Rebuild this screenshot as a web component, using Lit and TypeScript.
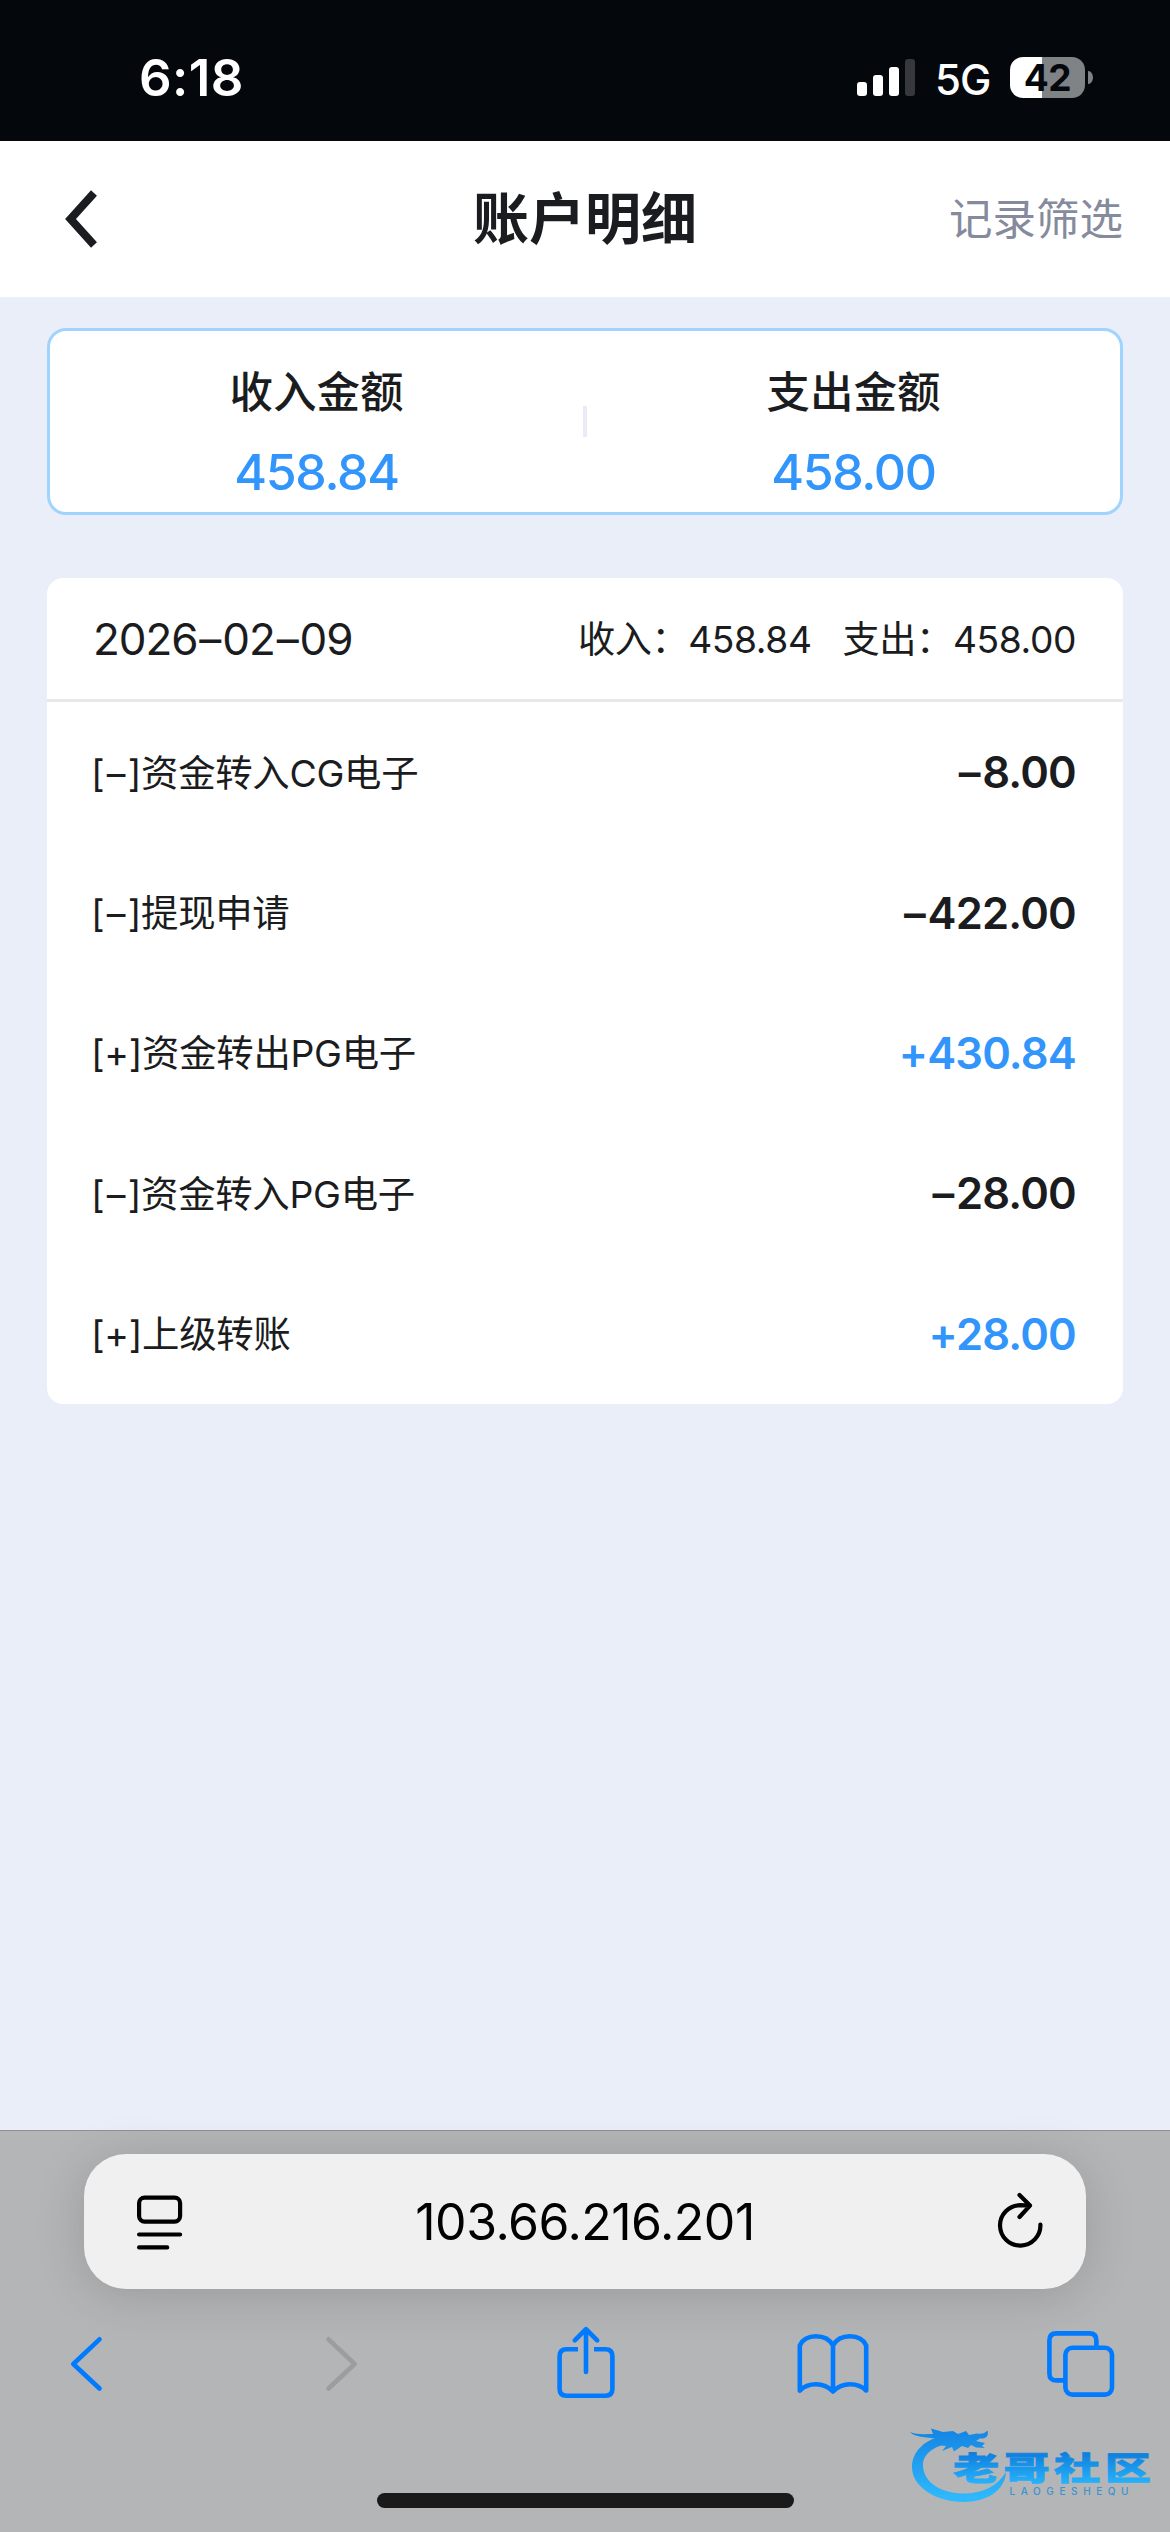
import { LitElement, html, css, svg } from "lit";
import { customElement, property } from "lit/decorators.js";
import { classMap } from "lit/directives/class-map.js";

interface Entry {
  label: string;
  amount: string;
  income: boolean;
}

const ENTRIES: Entry[] = [
  { label: "[–]资金转入CG电子", amount: "–8.00", income: false },
  { label: "[–]提现申请", amount: "–422.00", income: false },
  { label: "[+]资金转出PG电子", amount: "+430.84", income: true },
  { label: "[–]资金转入PG电子", amount: "–28.00", income: false },
  { label: "[+]上级转账", amount: "+28.00", income: true },
];

/** Gives every dash in a text its own span, so that it gets air on both sides. */
const spacedDashes = (text: string) =>
  text.split(/(–)/).map((part) => (part === "–" ? html`<span class="dash">–</span>` : part));

@customElement("status-bar")
class StatusBar extends LitElement {
  static styles = css`
    :host {
      display: flex;
      justify-content: space-between;
      box-sizing: border-box;
      height: 141px;
      padding: 57px 77px 0 139px;
      background: #04070c;
      color: #fff;
    }
    .time {
      font-size: 51px;
      font-weight: 600;
      line-height: 41px;
      letter-spacing: 0.4px;
    }
    .right {
      display: flex;
      height: 41px;
    }
    .signal {
      width: 60px;
      height: 41px;
      margin-right: 18px;
    }
    .network {
      width: 58px;
      margin-right: 17px;
      font-size: 42px;
      font-weight: 500;
      line-height: 45px;
      letter-spacing: -1px;
    }
    .battery {
      width: 75px;
      height: 41px;
      border-radius: 13px;
      background: linear-gradient(90deg, #fff 32px, #808385 32px);
      color: #04070c;
      font-size: 37px;
      font-weight: 700;
      line-height: 42px;
      letter-spacing: -0.5px;
      text-align: center;
    }
    .nub {
      width: 5px;
      height: 13px;
      margin: 14px 0 0 3px;
      border-radius: 0 5px 5px 0 / 0 7px 7px 0;
      background: #808385;
    }
  `;
  render() {
    return html`
      <div class="time">6:18</div>
      <div class="right">
        <svg class="signal" viewBox="0 0 60 41" fill="#fff">
          <rect x="0" y="25" width="10" height="14" rx="3" />
          <rect x="16" y="18" width="10" height="21" rx="3" />
          <rect x="32" y="10" width="10" height="29" rx="3" />
          <rect x="48" y="2" width="10" height="37" rx="3" fill="#36383d" />
        </svg>
        <div class="network">5G</div>
        <div class="battery">42</div>
        <div class="nub"></div>
      </div>
    `;
  }
}

@customElement("nav-header")
class NavHeader extends LitElement {
  static styles = css`
    :host {
      display: grid;
      grid-template-columns: 1fr auto 1fr;
      align-items: center;
      box-sizing: border-box;
      height: 156px;
      padding: 0 47px;
      background: #fff;
    }
    .back {
      display: block;
      width: 40px;
      height: 64px;
      margin-left: 15px;
    }
    .title {
      color: #1b1c20;
      font-size: 56px;
      font-weight: 600;
      line-height: 80px;
    }
    .filter {
      justify-self: end;
      color: #858b9c;
      font-size: 43.5px;
      line-height: 60px;
    }
  `;
  render() {
    return html`
      <svg class="back" viewBox="0 0 40 64" fill="none" stroke="#1b1c20" stroke-width="8">
        <path d="M32 6 L8.5 32 L32 58" />
      </svg>
      <div class="title">账户明细</div>
      <div class="filter">记录筛选</div>
    `;
  }
}

@customElement("summary-card")
class SummaryCard extends LitElement {
  static styles = css`
    :host {
      display: grid;
      grid-template-columns: 1fr 4px 1fr;
      align-items: center;
      box-sizing: border-box;
      height: 187px;
      border: 3px solid #a0d4ff;
      border-radius: 19px;
      background: #fff;
    }
    .cell {
      display: flex;
      flex-direction: column;
      align-items: center;
      padding-top: 18px;
    }
    .name {
      color: #1b1c20;
      font-size: 43.5px;
      font-weight: 500;
      line-height: 64px;
    }
    .value {
      color: #3295fb;
      font-size: 50px;
      font-weight: 500;
      line-height: 60px;
      letter-spacing: -1.3px;
      margin-top: 18px;
    }
    .rule {
      height: 31px;
      background: #ebebf7;
    }
  `;
  render() {
    return html`
      <div class="cell">
        <div class="name">收入金额</div>
        <div class="value">458.84</div>
      </div>
      <div class="rule"></div>
      <div class="cell">
        <div class="name">支出金额</div>
        <div class="value">458.00</div>
      </div>
    `;
  }
}

@customElement("detail-card")
class DetailCard extends LitElement {
  @property({ attribute: false }) entries: Entry[] = [];

  static styles = css`
    :host {
      display: block;
      overflow: hidden;
      border-radius: 16px;
      background: #fff;
      color: #1b1c20;
    }
    .head {
      display: flex;
      align-items: center;
      justify-content: space-between;
      box-sizing: border-box;
      height: 124px;
      padding: 0 47px 0 46px;
      border-bottom: 3px solid #e8e8e8;
    }
    .date {
      font-size: 44px;
      letter-spacing: -1.1px;
    }
    .date .dash {
      margin: 0 2px;
    }
    .totals {
      display: flex;
      gap: 31px;
      padding-bottom: 4px;
      font-size: 37.2px;
      letter-spacing: -0.4px;
    }
    .row {
      display: flex;
      align-items: center;
      justify-content: space-between;
      height: 140.4px;
      padding: 0 47px 0 44px;
    }
    .label {
      padding-bottom: 3px;
      font-size: 37.4px;
      letter-spacing: -0.3px;
    }
    .label .dash {
      margin: 0 2.5px;
    }
    .amount {
      font-size: 43.5px;
      font-weight: 600;
      letter-spacing: -0.8px;
    }
    .amount .dash {
      margin-right: 2.5px;
    }
    .income {
      color: #3295fb;
    }
  `;
  render() {
    return html`
      <div class="head">
        <div class="date">${spacedDashes("2026–02–09")}</div>
        <div class="totals">
          <span>收入：458.84</span>
          <span>支出：458.00</span>
        </div>
      </div>
      ${this.entries.map(
        (e) => html`
          <div class="row">
            <span class="label">${spacedDashes(e.label)}</span>
            <span class=${classMap({ amount: true, income: e.income })}>${spacedDashes(e.amount)}</span>
          </div>
        `,
      )}
    `;
  }
}

@customElement("browser-bar")
class BrowserBar extends LitElement {
  static styles = css`
    :host {
      display: flex;
      flex-direction: column;
      align-items: center;
      box-sizing: border-box;
      height: 402px;
      border-top: 1px solid #8e9092;
      padding-top: 23px;
      background: #b4b5b7;
    }
    .field {
      display: flex;
      align-items: center;
      justify-content: space-between;
      box-sizing: border-box;
      width: 1002px;
      height: 135px;
      padding: 0 44px;
      border-radius: 42px;
      background: #f0f0f0;
      box-shadow: 0 6px 50px rgba(0, 0, 0, 0.15);
      color: #000;
    }
    .field svg {
      display: block;
      width: 56px;
      height: 64px;
      margin: 0 -4px 0 4px;
    }
    .address {
      font-size: 50px;
      line-height: 60px;
      letter-spacing: -0.5px;
    }
    .tools {
      display: grid;
      grid-template-columns: 172px 340px 148px 346px 150px 14px;
      justify-items: center;
      width: 1170px;
      margin-top: 35px;
    }
    .tools svg {
      display: block;
      width: 80px;
      height: 80px;
    }
    .home {
      width: 417px;
      height: 15px;
      margin-top: 89px;
      border-radius: 8px;
      background: #1a1a1a;
    }
  `;
  private tool(body: unknown, color = "#007aff") {
    return html`<svg
      viewBox="0 0 80 80"
      fill="none"
      stroke=${color}
      stroke-width="4.6"
      stroke-linecap="round"
      stroke-linejoin="round"
    >
      ${body}
    </svg>`;
  }
  render() {
    return html`
      <div class="field">
        <svg viewBox="0 0 56 64" fill="none" stroke="#000" stroke-width="4.2" stroke-linecap="round">
          <rect x="7.1" y="7.6" width="41" height="24" rx="5.5" />
          <path d="M7.1 44.5 H48.1 M7.1 57.4 H35.2" />
        </svg>
        <div class="address">103.66.216.201</div>
        <svg
          viewBox="0 0 56 64"
          fill="none"
          stroke="#000"
          stroke-width="4.2"
          stroke-linecap="round"
          stroke-linejoin="round"
        >
          <path d="M50.4 34.5 A20.2 20.2 0 1 1 30.2 15.2 L39 15.6 M29.5 5 L40 15.6 L29.5 27" />
        </svg>
      </div>
      <div class="tools">
        ${this.tool(svg`<path d="M53.5 15.3 L27.3 40 L53.5 64.5" />`)}
        ${this.tool(svg`<path d="M26.5 15.3 L52.7 40 L26.5 64.5" />`, "#9c9d9f")}
        ${this.tool(svg`
          <path stroke-linecap="butt" d="M32 25.3 H20.5 Q13.6 25.3 13.6 32.2 V64.8 Q13.6 71.7 20.5 71.7 H59.5 Q66.4 71.7 66.4 64.8 V32.2 Q66.4 25.3 59.5 25.3 H48" />
          <path d="M40 48 V6 M28.8 16.4 L40 5.2 L51.2 16.4" />
        `)}
        ${this.tool(svg`
          <path d="M6.8 21.5 Q11 12.3 23 12.3 Q35 12.3 40 21.5 Q45 12.3 57 12.3 Q69 12.3 73.2 21.5 V66.5 Q67 60.3 57 60.3 Q47 60.3 40 67.5 Q33 60.3 23 60.3 Q13 60.3 6.8 66.5 Z M40 21.5 V67" />
        `)}
        ${this.tool(svg`
          <rect x="24.4" y="23.8" width="46.6" height="46.8" rx="7" />
          <path stroke-linecap="butt" d="M24.4 56.4 H15.5 Q8.4 56.4 8.4 49.4 V16.4 Q8.4 9.4 15.5 9.4 H48.4 Q55.4 9.4 55.4 16.4 V23" />
        `)}
      </div>
      <div class="home"></div>
    `;
  }
}

@customElement("site-mark")
class SiteMark extends LitElement {
  static styles = css`
    :host {
      display: block;
      width: 260px;
      height: 100px;
    }
    svg {
      display: block;
      width: 260px;
      height: 100px;
    }
    .name {
      font-family: "Noto Sans CJK SC", sans-serif;
      font-size: 34px;
      font-weight: 900;
    }
    .latin {
      font-family: Inter, "Liberation Sans", sans-serif;
      font-size: 10px;
      font-weight: 500;
    }
  `;
  render() {
    return html`
      <svg viewBox="0 0 260 100">
        <defs>
          <linearGradient id="ring" x1="0" y1="22" x2="0" y2="92" gradientUnits="userSpaceOnUse">
            <stop offset="0" stop-color="#1283e2" />
            <stop offset="1" stop-color="#2fb8fd" />
          </linearGradient>
          <linearGradient id="word" x1="0" y1="0" x2="0" y2="1">
            <stop offset="0.2" stop-color="#0c7cdc" />
            <stop offset="0.9" stop-color="#28b3fb" />
          </linearGradient>
        </defs>
        <g fill="url(#ring)">
          <path
            d="M42 31 C24 35 12 47 12 62 C12 82 36 97 64 97 C86 97 105 86 106 67 C98 81 82 88.5 64 88.5 C42 88.5 23 78 23 60 C23 49 34 41 50 38 Z"
          />
          <path
            d="M10 27 C16 30 26 29 33 29 L31 23.5 L43 27 L53 26 L58 29 L66 26 L69 30 L77 28.5 C82 29.5 85 28 87.5 25.5 C89 31 86 34 80 33.5 L76 36 L85 38 L82 41 L85 43 L76 42.5 L71 40 L68 43 L62 41 L54 46.5 L52 42 L42 46 L46 41 L36 40 L40 34 C28 32 15 33 10 27 Z"
          />
        </g>
        <text
          class="name"
          fill="url(#word)"
          stroke="url(#word)"
          stroke-width="0.8"
          transform="translate(53 74.5) scale(1.36 0.94)"
          textLength="145.5"
          x="0"
          y="0"
        >老哥社区</text>
        <text class="latin" fill="#3d92cf" x="109.5" y="89.5" textLength="119">LAOGESHEQU</text>
      </svg>
    `;
  }
}

@customElement("app-root")
class AppRoot extends LitElement {
  static styles = css`
    :host {
      display: flex;
      flex-direction: column;
      position: relative;
      width: 1170px;
      height: 2532px;
      overflow: hidden;
      background: #e9eef9;
      font-family: Inter, "Noto Sans CJK SC", sans-serif;
      white-space: nowrap;
    }
    .content {
      display: flex;
      flex: 1;
      flex-direction: column;
      gap: 63px;
      padding: 31px 47px 0;
    }
    .mark {
      position: absolute;
      left: 900px;
      top: 2405px;
    }
  `;
  render() {
    return html`
      <status-bar></status-bar>
      <nav-header></nav-header>
      <main class="content">
        <summary-card></summary-card>
        <detail-card .entries=${ENTRIES}></detail-card>
      </main>
      <browser-bar></browser-bar>
      <site-mark class="mark"></site-mark>
    `;
  }
}
